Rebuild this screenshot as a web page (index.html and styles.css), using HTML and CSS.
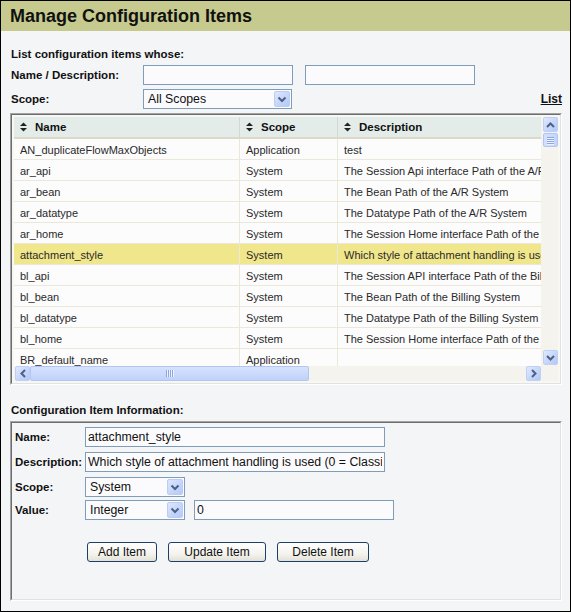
FILE: index.html
```html
<!DOCTYPE html>
<html>
<head>
<meta charset="utf-8">
<link rel="stylesheet" href="styles.css">
</head>
<body>
<div class="page">
  <div class="titlebar"><h1>Manage Configuration Items</h1></div>
  <div class="content">
    <div class="caption">List configuration items whose:</div>
    <div class="frow">
      <label class="flabel">Name / Description:</label>
      <input class="txt w150" type="text" value="">
      <input class="txt w170" type="text" value="">
    </div>
    <div class="frow">
      <label class="flabel">Scope:</label>
      <div class="sel w149">
        <span class="val">All Scopes</span>
        <span class="dd"><svg width="10" height="7" viewBox="0 0 10 7"><polyline points="1.5,1.5 5,5 8.5,1.5" fill="none" stroke="#4d6185" stroke-width="2"/></svg></span>
      </div>
      <a class="listlink" href="#">List</a>
    </div>

    <div class="gridbox">
      <div class="gridinner">
        <div class="tablearea">
          <div class="row head">
            <div class="cell c1"><svg class="sort" width="7" height="10" viewBox="0 0 7 10"><polygon points="0,4 3.5,0.5 7,4" fill="#222"/><polygon points="0,6 3.5,9.5 7,6" fill="#222"/></svg>Name</div>
            <div class="cell c2"><svg class="sort" width="7" height="10" viewBox="0 0 7 10"><polygon points="0,4 3.5,0.5 7,4" fill="#222"/><polygon points="0,6 3.5,9.5 7,6" fill="#222"/></svg>Scope</div>
            <div class="cell c3"><svg class="sort" width="7" height="10" viewBox="0 0 7 10"><polygon points="0,4 3.5,0.5 7,4" fill="#222"/><polygon points="0,6 3.5,9.5 7,6" fill="#222"/></svg>Description</div>
          </div>
          <div class="row"><div class="cell c1">AN_duplicateFlowMaxObjects</div><div class="cell c2">Application</div><div class="cell c3">test</div></div>
          <div class="row"><div class="cell c1">ar_api</div><div class="cell c2">System</div><div class="cell c3">The Session Api interface Path of the A/R System</div></div>
          <div class="row"><div class="cell c1">ar_bean</div><div class="cell c2">System</div><div class="cell c3">The Bean Path of the A/R System</div></div>
          <div class="row"><div class="cell c1">ar_datatype</div><div class="cell c2">System</div><div class="cell c3">The Datatype Path of the A/R System</div></div>
          <div class="row"><div class="cell c1">ar_home</div><div class="cell c2">System</div><div class="cell c3">The Session Home interface Path of the A/R System</div></div>
          <div class="row sel-row"><div class="cell c1">attachment_style</div><div class="cell c2">System</div><div class="cell c3">Which style of attachment handling is used</div></div>
          <div class="row"><div class="cell c1">bl_api</div><div class="cell c2">System</div><div class="cell c3">The Session API interface Path of the Billing System</div></div>
          <div class="row"><div class="cell c1">bl_bean</div><div class="cell c2">System</div><div class="cell c3">The Bean Path of the Billing System</div></div>
          <div class="row"><div class="cell c1">bl_datatype</div><div class="cell c2">System</div><div class="cell c3">The Datatype Path of the Billing System</div></div>
          <div class="row"><div class="cell c1">bl_home</div><div class="cell c2">System</div><div class="cell c3">The Session Home interface Path of the Billing System</div></div>
          <div class="row"><div class="cell c1">BR_default_name</div><div class="cell c2">Application</div><div class="cell c3"></div></div>
        </div>
        <div class="vscroll">
          <div class="sbtn"><svg width="9" height="6" viewBox="0 0 9 6"><polyline points="1,5 4.5,1.5 8,5" fill="none" stroke="#4d6185" stroke-width="2"/></svg></div>
          <div class="vthumb"><span></span><span></span><span></span><span></span></div>
          <div class="spacer"></div>
          <div class="sbtn"><svg width="9" height="6" viewBox="0 0 9 6"><polyline points="1,1 4.5,4.5 8,1" fill="none" stroke="#4d6185" stroke-width="2"/></svg></div>
        </div>
        <div class="hscroll">
          <div class="sbtn"><svg width="6" height="9" viewBox="0 0 6 9"><polyline points="5,1 1.5,4.5 5,8" fill="none" stroke="#4d6185" stroke-width="2"/></svg></div>
          <div class="hthumb"><span></span><span></span><span></span><span></span></div>
          <div class="spacer"></div>
          <div class="sbtn"><svg width="6" height="9" viewBox="0 0 6 9"><polyline points="1,1 4.5,4.5 1,8" fill="none" stroke="#4d6185" stroke-width="2"/></svg></div>
        </div>
        <div class="corner"></div>
      </div>
    </div>

    <div class="caption caption2">Configuration Item Information:</div>
    <div class="infobox">
      <div class="infoinner">
        <div class="form">
          <label class="flabel">Name:</label>
          <input class="txt w300" type="text" value="attachment_style">
          <label class="flabel">Description:</label>
          <input class="txt w300" type="text" value="Which style of attachment handling is used (0 = Classic)">
          <label class="flabel">Scope:</label>
          <div class="sel w100">
            <span class="val">System</span>
            <span class="dd"><svg width="10" height="7" viewBox="0 0 10 7"><polyline points="1.5,1.5 5,5 8.5,1.5" fill="none" stroke="#4d6185" stroke-width="2"/></svg></span>
          </div>
          <label class="flabel">Value:</label>
          <div class="valrow">
            <div class="sel w100">
              <span class="val">Integer</span>
              <span class="dd"><svg width="10" height="7" viewBox="0 0 10 7"><polyline points="1.5,1.5 5,5 8.5,1.5" fill="none" stroke="#4d6185" stroke-width="2"/></svg></span>
            </div>
            <input class="txt w200" type="text" value="0">
          </div>
        </div>
        <div class="buttons">
          <button class="btn b-add" type="button">Add Item</button>
          <button class="btn b-upd" type="button">Update Item</button>
          <button class="btn b-del" type="button">Delete Item</button>
        </div>
      </div>
    </div>
  </div>
</div>
</body>
</html>
```
FILE: styles.css
```css
* { box-sizing: border-box; }
body {
  margin: 0;
  font-family: "Liberation Sans", Arial, sans-serif;
  color: #111;
}
.page {
  width: 571px;
  height: 612px;
  border: 1px solid #000;
  background: #f4f5f7;
  overflow: hidden;
}
.titlebar {
  height: 30px;
  background: #c6ca8e;
  padding-left: 9px;
  display: flex;
  align-items: center;
}
.titlebar h1 {
  margin: 0;
  font-size: 18px;
  font-weight: bold;
  line-height: 22px;
  color: #111;
}
.content {
  padding: 16px 8px 0 9px;
}
.caption {
  font-size: 11.5px;
  font-weight: bold;
  line-height: 14px;
  margin-left: 1px;
}
.frow {
  display: flex;
  align-items: center;
  height: 20px;
  margin-top: 4px;
}
.frow .flabel {
  width: 132px;
  margin-left: 1px;
}
.flabel {
  font-size: 11.5px;
  font-weight: bold;
  line-height: 20px;
  color: #111;
}
.txt {
  height: 20px;
  border: 1px solid #7f9db9;
  background: #fbfbfe;
  font-family: "Liberation Sans", Arial, sans-serif;
  font-size: 12.3px;
  color: #111;
  padding: 0 2px;
  margin: 0;
  outline: none;
}
.w150 { width: 150px; }
.w170 { width: 170px; margin-left: 12px; }
.w149 { width: 149px; }
.w300 { width: 300px; }
.w100 { width: 100px; }
.w200 { width: 200px; }
.sel {
  display: flex;
  align-items: center;
  height: 20px;
  border: 1px solid #7f9db9;
  background: #fbfbfe;
  padding: 1px;
}
.sel .val {
  flex: 1;
  padding-left: 3px;
  font-size: 12.3px;
  color: #111;
  white-space: nowrap;
}
.dd {
  width: 16px;
  height: 16px;
  border: 1px solid #bccdf5;
  border-radius: 2px;
  background: linear-gradient(135deg, #dde7fe 0%, #c3d4fb 60%, #b5c9f8 100%);
  display: flex;
  align-items: center;
  justify-content: center;
}
.listlink {
  margin-left: auto;
  font-size: 12px;
  font-weight: bold;
  color: #111;
  text-decoration: underline;
}

/* grid */
.gridbox {
  margin-top: 4px;
  width: 552px;
  border: 1px solid;
  border-color: #a3a3a3 #ffffff #ffffff #a3a3a3;
}
.gridinner {
  border: 1px solid;
  border-color: #6e6e6e #e2e2e2 #e2e2e2 #6e6e6e;
  padding: 2px;
  background: #f7f7f4;
  display: grid;
  grid-template-columns: 527px 17px;
  grid-template-rows: 249px 15px;
}
.tablearea {
  overflow: hidden;
  background: #fcfcfd;
}
.row {
  display: flex;
  width: 560px;
  height: 21px;
  border-bottom: 1px solid #ebe8da;
}
.cell {
  flex: none;
  padding: 2px 0 0 6px;
  font-size: 11px;
  line-height: 18px;
  color: #2a2a2a;
  white-space: nowrap;
  overflow: hidden;
  border-right: 1px solid #ebe8da;
}
.c1 { width: 226px; }
.c2 { width: 98px; }
.c3 { width: 236px; }
.row.head {
  height: 22px;
  background: #e4ecea;
  border-bottom: 2px solid #dcd9c8;
}
.row.head .cell {
  padding-top: 0;
  font-size: 11.5px;
  font-weight: bold;
  color: #111;
  display: flex;
  align-items: center;
  border-right-color: #d4d7d2;
}
.sort { margin-right: 8px; flex: none; }
.sel-row { background: #f0e68c; }

/* scrollbars */
.vscroll {
  background: #f4f3ee;
  display: flex;
  flex-direction: column;
  align-items: center;
  padding: 0 0 1px 1px;
}
.hscroll {
  background: #f4f3ee;
  display: flex;
  padding-left: 1px;
}
.corner { background: #f4f3ee; }
.spacer { flex: 1; }
.sbtn {
  flex: none;
  width: 15px;
  height: 15px;
  border: 1px solid #bfd0f6;
  border-radius: 2px;
  background: linear-gradient(135deg, #e0e9fe 0%, #c6d6fb 55%, #b4c8f7 100%);
  display: flex;
  align-items: center;
  justify-content: center;
}
.vthumb {
  flex: none;
  width: 15px;
  height: 14px;
  margin-top: 1px;
  border: 1px solid #b3c6f3;
  border-radius: 2px;
  background: linear-gradient(90deg, #d4e0fd, #c3d4fb);
  display: flex;
  flex-direction: column;
  align-items: center;
  justify-content: center;
  gap: 1px;
}
.vthumb span {
  width: 7px;
  height: 1px;
  background: #8aa5e4;
  box-shadow: 0 1px 0 #eef3ff;
}
.hthumb {
  flex: none;
  width: 279px;
  height: 15px;
  border: 1px solid #b3c6f3;
  border-radius: 2px;
  background: linear-gradient(180deg, #d6e2fd, #c0d2fb);
  display: flex;
  align-items: center;
  justify-content: center;
  gap: 1px;
}
.hthumb span {
  width: 1px;
  height: 7px;
  background: #8aa5e4;
  box-shadow: 1px 0 0 #eef3ff;
}

/* info section */
.caption2 {
  margin-top: 18px;
}
.infobox {
  margin-top: 4px;
  width: 552px;
  height: 180px;
  border: 1px solid;
  border-color: #a3a3a3 #ffffff #ffffff #a3a3a3;
}
.infoinner {
  height: 100%;
  border: 1px solid;
  border-color: #6e6e6e #e2e2e2 #e2e2e2 #6e6e6e;
  padding: 4px 0 0 3px;
}
.form {
  display: grid;
  grid-template-columns: 70px auto;
  grid-template-rows: 25px 25px 23px 20px;
  align-items: start;
}
.form .flabel { line-height: 20px; }
.valrow {
  display: flex;
  gap: 9px;
}
.buttons {
  display: flex;
  gap: 11px;
  margin: 22px 0 0 72px;
}
.btn {
  height: 20px;
  padding: 0;
  border: 1px solid #1f3f6a;
  border-radius: 3px;
  background: linear-gradient(180deg, #ffffff 0%, #f4f3ee 60%, #e3e1d6 100%);
  font-family: "Liberation Sans", Arial, sans-serif;
  font-size: 12px;
  color: #111;
}
.b-add { width: 70px; }
.b-upd { width: 98px; }
.b-del { width: 92px; }
```
